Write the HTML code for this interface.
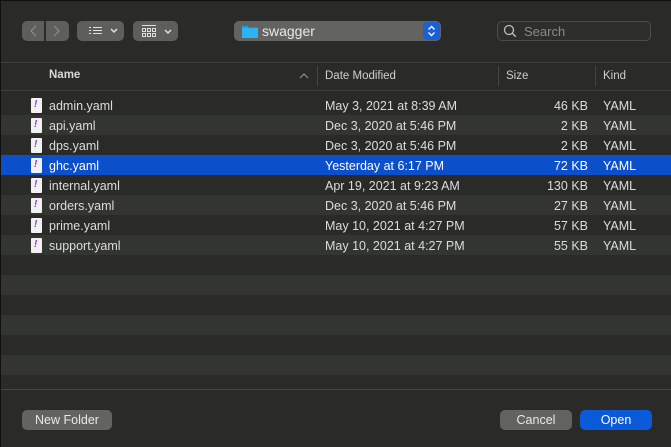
<!DOCTYPE html>
<html><head><meta charset="utf-8"><style>
*{margin:0;padding:0;box-sizing:border-box}
body{width:671px;height:447px;background:#2a2b29;font-family:"Liberation Sans",sans-serif;color:#dcdcdc;position:relative;overflow:hidden;font-size:12.5px}
.abs{position:absolute}
.btn{position:absolute;background:#5e5f5c;border-radius:5px}
.row{position:absolute;left:1px;right:0;height:20px}
.row span{position:absolute;top:3px;white-space:nowrap}
.ic{position:absolute;left:30px;top:2px;width:11px;height:15px;background:#f2f2f2;border-radius:1px}
.ic:after{content:"!";position:absolute;left:3px;top:1px;color:#8a3fc0;font-style:italic;font-weight:bold;font-size:10px}
</style></head><body>
<div class="abs" style="left:0;top:0;width:1px;height:447px;background:#111"></div>
<div class="abs" style="left:0;top:0;width:671px;height:1px;background:#111"></div>
<div class="btn" style="left:22px;top:21px;width:22px;height:20px;border-radius:5px 0 0 5px"></div>
<div class="btn" style="left:46px;top:21px;width:23px;height:20px;border-radius:0 5px 5px 0"></div>
<svg class="abs" style="left:22px;top:21px" width="48" height="20"><path d="M14 5 L9 10 L14 15" stroke="#8d8e8b" fill="none" stroke-width="1.2"/><path d="M32 5 L37 10 L32 15" stroke="#8d8e8b" fill="none" stroke-width="1.2"/></svg>
<div class="btn" style="left:77px;top:21px;width:47px;height:20px"></div>
<svg class="abs" style="left:77px;top:21px" width="47" height="20"><g stroke="#e0e0e0" stroke-width="1"><path d="M12 6.5h2M12 9.5h2M12 12.5h2M16 6.5h9M16 9.5h9M16 12.5h9"/><path d="M34 8l3 3 3-3" fill="none" stroke-width="1.5"/></g></svg>
<div class="btn" style="left:133px;top:21px;width:45px;height:20px"></div>
<svg class="abs" style="left:133px;top:21px" width="45" height="20"><g stroke="#e0e0e0" stroke-width="1" fill="none"><path d="M9 4.5h14"/><rect x="9.5" y="7.5" width="3" height="3"/><rect x="14.5" y="7.5" width="3" height="3"/><rect x="19.5" y="7.5" width="3" height="3"/><rect x="9.5" y="12.5" width="3" height="3"/><rect x="14.5" y="12.5" width="3" height="3"/><rect x="19.5" y="12.5" width="3" height="3"/><path d="M32 9l3 3 3-3" stroke-width="1.5"/></g></svg>
<div class="btn" style="left:234px;top:21px;width:207px;height:20px;background:#636461"></div>
<svg class="abs" style="left:242px;top:24px" width="16" height="14"><path d="M0 2h6l1 1.5h9V14H0z" fill="#1aa2e8"/><rect x="0" y="4" width="16" height="10" fill="#2eb3f2"/></svg>
<div class="abs" style="left:262px;top:23px;font-size:14px;color:#e8e8e8">swagger</div>
<div class="abs" style="left:423px;top:22px;width:17px;height:18px;background:#1a5fd6;border-radius:4px"></div>
<svg class="abs" style="left:423px;top:22px" width="17" height="18"><path d="M5.5 7.5l3-3 3 3M5.5 10.5l3 3 3-3" stroke="#fff" stroke-width="1.4" fill="none"/></svg>
<div class="abs" style="left:497px;top:21px;width:154px;height:20px;border:1px solid #4c4d4a;border-radius:5px;background:#2e2f2c"></div>
<svg class="abs" style="left:503px;top:24px" width="14" height="14"><circle cx="6" cy="6" r="4.5" stroke="#bdbdbd" stroke-width="1.3" fill="none"/><path d="M9.3 9.3l3.5 3.5" stroke="#bdbdbd" stroke-width="1.4"/></svg>
<div class="abs" style="left:524px;top:24px;font-size:13px;color:#8a8a88">Search</div>
<div class="abs" style="left:1px;top:62px;width:670px;height:1px;background:#3e3f3c"></div>
<div class="abs" style="left:1px;top:90px;width:670px;height:1px;background:#3e3f3c"></div>
<div class="abs" style="left:49px;top:69px;font-weight:bold;color:#d8d8d8;font-size:11.5px">Name</div>
<svg class="abs" style="left:299px;top:72px" width="10" height="8"><path d="M1 6l4-4 4 4" stroke="#999" fill="none" stroke-width="1"/></svg>
<div class="abs" style="left:317px;top:66px;width:1px;height:20px;background:#454643"></div>
<div class="abs" style="left:325px;top:70px;color:#cfcfcf;font-size:11.5px">Date Modified</div>
<div class="abs" style="left:498px;top:66px;width:1px;height:20px;background:#454643"></div>
<div class="abs" style="left:506px;top:70px;color:#cfcfcf;font-size:11.5px">Size</div>
<div class="abs" style="left:595px;top:66px;width:1px;height:20px;background:#454643"></div>
<div class="abs" style="left:603px;top:70px;color:#cfcfcf;font-size:11.5px">Kind</div>
<div class="row" style="top:115px;background:#333532"></div>
<div class="row" style="top:155px;background:#0b4fca"></div>
<div class="row" style="top:195px;background:#333532"></div>
<div class="row" style="top:235px;background:#333532"></div>
<div class="row" style="top:275px;background:#333532"></div>
<div class="row" style="top:315px;background:#333532"></div>
<div class="row" style="top:355px;background:#333532"></div>
<div class="abs" style="left:1px;top:389px;width:670px;height:1px;background:#454643"></div>
<div class="row" style="top:96px"><i class="ic"></i><span style="left:48px">admin.yaml</span><span style="left:324px">May 3, 2021 at 8:39 AM</span><span style="right:83px">46 KB</span><span style="left:602px">YAML</span></div>
<div class="row" style="top:116px"><i class="ic"></i><span style="left:48px">api.yaml</span><span style="left:324px">Dec 3, 2020 at 5:46 PM</span><span style="right:83px">2 KB</span><span style="left:602px">YAML</span></div>
<div class="row" style="top:136px"><i class="ic"></i><span style="left:48px">dps.yaml</span><span style="left:324px">Dec 3, 2020 at 5:46 PM</span><span style="right:83px">2 KB</span><span style="left:602px">YAML</span></div>
<div class="row" style="top:156px;color:#fff"><i class="ic"></i><span style="left:48px">ghc.yaml</span><span style="left:324px">Yesterday at 6:17 PM</span><span style="right:83px">72 KB</span><span style="left:602px">YAML</span></div>
<div class="row" style="top:176px"><i class="ic"></i><span style="left:48px">internal.yaml</span><span style="left:324px">Apr 19, 2021 at 9:23 AM</span><span style="right:83px">130 KB</span><span style="left:602px">YAML</span></div>
<div class="row" style="top:196px"><i class="ic"></i><span style="left:48px">orders.yaml</span><span style="left:324px">Dec 3, 2020 at 5:46 PM</span><span style="right:83px">27 KB</span><span style="left:602px">YAML</span></div>
<div class="row" style="top:216px"><i class="ic"></i><span style="left:48px">prime.yaml</span><span style="left:324px">May 10, 2021 at 4:27 PM</span><span style="right:83px">57 KB</span><span style="left:602px">YAML</span></div>
<div class="row" style="top:236px"><i class="ic"></i><span style="left:48px">support.yaml</span><span style="left:324px">May 10, 2021 at 4:27 PM</span><span style="right:83px">55 KB</span><span style="left:602px">YAML</span></div>
<div class="btn" style="left:22px;top:410px;width:90px;height:20px;background:#636461;text-align:center;line-height:20px;font-size:12.5px;color:#e8e8e8">New Folder</div>
<div class="btn" style="left:500px;top:410px;width:72px;height:20px;background:#636461;text-align:center;line-height:20px;font-size:12.5px;color:#e8e8e8">Cancel</div>
<div class="btn" style="left:580px;top:410px;width:72px;height:20px;background:#0b5ad9;text-align:center;line-height:20px;font-size:12.5px;color:#fff">Open</div>
</body></html>
